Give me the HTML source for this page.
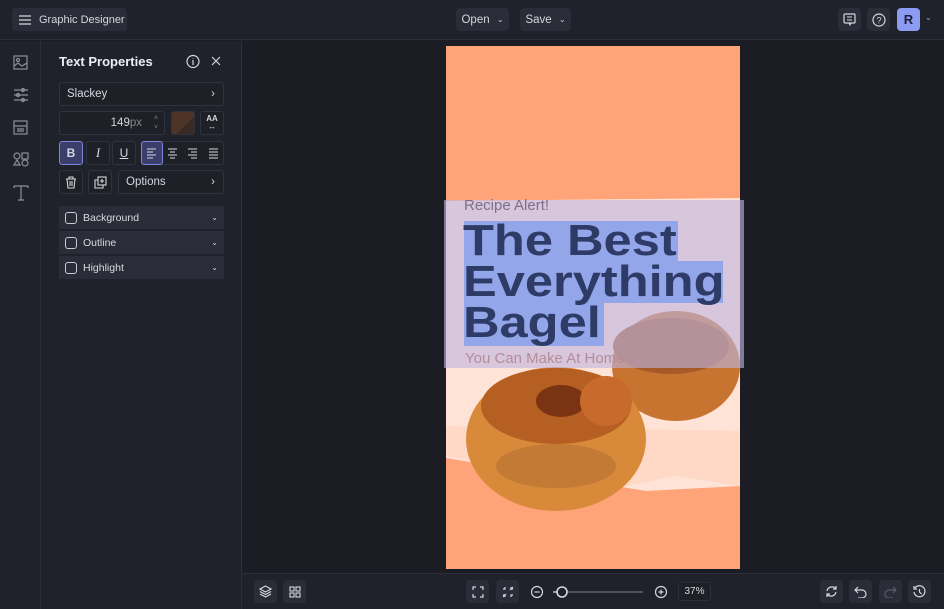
<!DOCTYPE html>
<html><head><meta charset="utf-8"><style>
*{box-sizing:border-box;margin:0;padding:0}
body{width:944px;height:609px;background:#1c1d24;font-family:"Liberation Sans",sans-serif;color:#d8dae2;position:relative;overflow:hidden;font-size:11px}
.abs{position:absolute}
.btn{position:absolute;background:#2a2c37;border-radius:4px;display:flex;align-items:center;justify-content:center;color:#d5d7df;white-space:nowrap}
.top{left:0;top:0;width:944px;height:40px;background:#20222b;border-bottom:1px solid #2c2e38}
.side{left:0;top:41px;width:41px;height:568px;background:#20222b;border-right:1px solid #2c2e38}
.panel{left:41px;top:41px;width:201px;height:568px;background:#20222b;border-right:1px solid #2c2e38}
.bot{left:242px;top:573px;width:702px;height:36px;background:#20222b;border-top:1px solid #2c2e38}
.fld{position:absolute;border:1px solid #30323d;border-radius:3px;background:#1e2028;color:#d5d7df;display:flex;align-items:center}
.acc{position:absolute;left:59px;width:165px;height:23px;background:#2a2c37;display:flex;align-items:center;font-size:10.5px}
.cb{width:12px;height:12px;border:1.3px solid #c8cad2;border-radius:3px;margin:0 6px 0 6px}
svg{display:block}
</style></head><body>
<div class="abs top"></div>
<div class="btn" style="left:12px;top:8px;width:115px;height:23px;justify-content:flex-start;padding-left:7px;font-size:11px">
<svg width="12" height="10"><path d="M0 1h12M0 5h12M0 9h12" stroke="#d5d7df" stroke-width="1.3"/></svg><span style="margin-left:8px">Graphic Designer</span></div>
<div class="btn" style="left:456px;top:8px;width:53px;height:23px;font-size:11.5px">Open&nbsp;<span style="font-size:8px;margin-left:4px">⌄</span></div>
<div class="btn" style="left:520px;top:8px;width:51px;height:23px;font-size:11.5px">Save&nbsp;<span style="font-size:8px;margin-left:4px">⌄</span></div>
<div class="btn" style="left:838px;top:8px;width:23px;height:23px"><svg width="13" height="13"><rect x="1" y="1" width="11" height="9" rx="1" fill="none" stroke="#d5d7df" stroke-width="1.2"/><path d="M4 4h5M4 7h5M6 10l1 2 1-2" stroke="#d5d7df" fill="none"/></svg></div>
<div class="btn" style="left:867px;top:8px;width:23px;height:23px"><svg width="14" height="14"><circle cx="7" cy="7" r="6" fill="none" stroke="#d5d7df" stroke-width="1.2"/><text x="7" y="10.5" font-size="9" text-anchor="middle" fill="#d5d7df" font-family="Liberation Sans">?</text></svg></div>
<div class="btn" style="left:897px;top:8px;width:23px;height:23px;background:#8c9cf2;color:#1b1e3a;font-weight:bold;font-size:13px">R</div>
<div class="abs" style="left:925px;top:13px;font-size:8px;color:#aaa">⌄</div>

<div class="abs side"></div>
<svg class="abs" style="left:13px;top:55px" width="16" height="150" fill="none" stroke="#8c8f9a" stroke-width="1.2">
<rect x="1" y="1" width="13" height="13"/><circle cx="5" cy="5" r="1.5"/><path d="M1 11l4-3 4 3 5-3"/>
<path d="M1 35h14M1 40h14M1 45h14"/><circle cx="10" cy="35" r="1.5"/><circle cx="5" cy="40" r="1.5"/><circle cx="10" cy="45" r="1.5"/>
<rect x="1" y="66" width="13" height="13"/><path d="M1 71h13M4 74h7M4 76h7"/>
<circle cx="4" cy="101" r="3"/><rect x="9" y="98" width="6" height="6"/><path d="M4 105l-3 5h6z"/><circle cx="12" cy="108" r="3"/>
<path d="M1 131h14M8 131v14M5 145h6M1 131v2M15 131v2"/>
</svg>

<div class="abs panel"></div>
<div class="abs" style="left:59px;top:54px;font-size:13px;font-weight:bold;color:#eceef3">Text Properties</div>
<svg class="abs" style="left:186px;top:54px" width="40" height="15" fill="none" stroke="#d5d7df" stroke-width="1.2"><circle cx="7" cy="7.5" r="6"/><path d="M7 6v5M7 4v.5"/><path d="M26 3l8 8M34 3l-8 8"/></svg>
<div class="fld" style="left:59px;top:82px;width:165px;height:24px;padding-left:7px;font-size:11.5px">Slackey<span style="position:absolute;right:8px">›</span></div>
<div class="fld" style="left:59px;top:111px;width:106px;height:24px;justify-content:flex-end;padding-right:22px;font-size:11.5px">149<span style="color:#888">px</span><span style="position:absolute;right:6px;font-size:7px;color:#888;line-height:9px">˄<br>˅</span></div>
<div class="abs" style="left:171px;top:111px;width:24px;height:24px;border-radius:3px;background:linear-gradient(135deg,#4d3426 60%,#3a2a24 60%);border:1px solid #30323d"></div>
<div class="fld" style="left:200px;top:111px;width:24px;height:24px;justify-content:center;font-size:8px;font-weight:bold;line-height:8px;text-align:center">AA<br>↔</div>
<div class="fld" style="left:59px;top:141px;width:24px;height:24px;justify-content:center;background:#3b3d6a;border-color:#7d85d8;font-weight:bold;font-size:12px">B</div>
<div class="fld" style="left:86px;top:141px;width:24px;height:24px;justify-content:center;font-style:italic;font-family:'Liberation Serif';font-size:13px">I</div>
<div class="fld" style="left:112px;top:141px;width:24px;height:24px;justify-content:center;text-decoration:underline;font-size:12px">U</div>
<div class="fld" style="left:141px;top:141px;width:83px;height:24px"></div>
<div class="abs" style="left:141px;top:141px;width:22px;height:24px;background:#3b3d6a;border:1px solid #7d85d8;border-radius:3px"></div>
<svg class="abs" style="left:146px;top:147px" width="75" height="12" stroke="#d5d7df" stroke-width="1.1"><path d="M1 2h9M1 5h6M1 8h9M1 11h6"/><path d="M22 2h9M24 5h5M22 8h9M24 11h5"/><path d="M42 2h9M45 5h6M42 8h9M45 11h6"/><path d="M63 2h9M63 5h9M63 8h9M63 11h9"/></svg>
<div class="fld" style="left:59px;top:170px;width:24px;height:24px;justify-content:center"><svg width="12" height="13" fill="none" stroke="#d5d7df" stroke-width="1.1"><path d="M1 3h10M4 3V1h4v2M2 3l1 9h6l1-9M5 5v5M7 5v5"/></svg></div>
<div class="fld" style="left:88px;top:170px;width:24px;height:24px;justify-content:center"><svg width="13" height="13" fill="none" stroke="#d5d7df" stroke-width="1.1"><rect x="4" y="1" width="8" height="8"/><path d="M4 4H1v8h8V9M8 3v4M6 5h4"/></svg></div>
<div class="fld" style="left:118px;top:170px;width:106px;height:24px;padding-left:7px;font-size:11.5px">Options<span style="position:absolute;right:8px">›</span></div>
<div class="acc" style="top:206px"><div class="cb"></div>Background<span style="position:absolute;right:6px;font-size:8px">⌄</span></div>
<div class="acc" style="top:231px"><div class="cb"></div>Outline<span style="position:absolute;right:6px;font-size:8px">⌄</span></div>
<div class="acc" style="top:256px"><div class="cb"></div>Highlight<span style="position:absolute;right:6px;font-size:8px">⌄</span></div>

<!-- canvas -->
<svg class="abs" style="left:446px;top:46px" width="294" height="523">
<rect width="294" height="523" fill="#ffa478"/>
<path d="M0 155 L294 152 L294 440 L200 445 L0 412 Z" fill="#ffe3d6"/>
<path d="M0 380 L294 385 L294 440 L230 430 L180 440 L0 410Z" fill="#ffd8c6"/>
<ellipse cx="230" cy="320" rx="64" ry="55" fill="#c6742f"/>
<ellipse cx="225" cy="300" rx="58" ry="28" fill="#a65a28"/>
<ellipse cx="110" cy="393" rx="90" ry="72" fill="#d88a3a"/>
<ellipse cx="110" cy="360" rx="75" ry="38" fill="#b55f22"/>
<ellipse cx="115" cy="355" rx="25" ry="16" fill="#7a3414"/>
<ellipse cx="160" cy="355" rx="26" ry="25" fill="#c86a2c"/>
<ellipse cx="110" cy="420" rx="60" ry="22" fill="#c27a35"/>
</svg>
<div class="abs" style="left:444px;top:200px;width:300px;height:168px;background:rgba(190,180,225,0.62)"></div>
<div class="abs" style="left:464px;top:221px;width:214px;height:40px;background:#93a6ea"></div>
<div class="abs" style="left:464px;top:261px;width:259px;height:42px;background:#93a6ea"></div>
<div class="abs" style="left:464px;top:303px;width:140px;height:43px;background:#93a6ea"></div>
<div class="abs" style="left:464px;top:197px;font-size:15px;color:#7e6f8a">Recipe Alert!</div>
<div class="abs" style="left:463px;top:220px;font-size:44px;font-weight:bold;color:#2e3b66;line-height:41px;font-family:'Liberation Sans',sans-serif;transform:scaleX(1.15);transform-origin:left;white-space:nowrap">The Best<br>Everything<br>Bagel</div>
<div class="abs" style="left:465px;top:350px;font-size:15px;color:#b58c9a">You Can Make At Home</div>

<div class="abs bot"></div>
<div class="btn" style="left:254px;top:580px;width:23px;height:23px"><svg width="13" height="13" fill="none" stroke="#d5d7df" stroke-width="1.1"><path d="M6.5 1L12 4 6.5 7 1 4z M1 6.5l5.5 3 5.5-3M1 9l5.5 3 5.5-3"/></svg></div>
<div class="btn" style="left:283px;top:580px;width:23px;height:23px"><svg width="12" height="12" fill="none" stroke="#d5d7df" stroke-width="1.1"><rect x="1" y="1" width="4" height="4"/><rect x="7" y="1" width="4" height="4"/><rect x="1" y="7" width="4" height="4"/><rect x="7" y="7" width="4" height="4"/></svg></div>
<div class="btn" style="left:466px;top:580px;width:23px;height:23px"><svg width="12" height="12" fill="none" stroke="#d5d7df" stroke-width="1.2"><path d="M1 4V1h3M8 1h3v3M11 8v3H8M4 11H1V8"/></svg></div>
<div class="btn" style="left:496px;top:580px;width:23px;height:23px"><svg width="12" height="12" fill="none" stroke="#d5d7df" stroke-width="1.2"><path d="M1 3h2V1M9 1v2h2M11 9H9v2M3 11V9H1M8 4l3-3M4 8l-3 3"/></svg></div>
<svg class="abs" style="left:530px;top:584px" width="140" height="16" fill="none" stroke="#d5d7df" stroke-width="1.2"><circle cx="7" cy="8" r="5.5"/><path d="M4.5 8h5"/><path d="M23 8h90" stroke="#6b6e7a"/><circle cx="32" cy="8" r="5" fill="#20222b" stroke-width="1.6"/><path d="M23 8h4"/><circle cx="131" cy="8" r="5.5"/><path d="M128.5 8h5M131 5.5v5"/></svg>
<div class="fld" style="left:678px;top:582px;width:33px;height:19px;justify-content:center;font-size:10px;border-color:#2c2e38">37%</div>
<div class="btn" style="left:820px;top:580px;width:23px;height:23px"><svg width="13" height="13" fill="none" stroke="#d5d7df" stroke-width="1.2"><path d="M2 6a5 5 0 0 1 9-2M11 1v3H8M11 7a5 5 0 0 1-9 2M2 12V9h3"/></svg></div>
<div class="btn" style="left:849px;top:580px;width:23px;height:23px"><svg width="13" height="12" fill="none" stroke="#d5d7df" stroke-width="1.2"><path d="M4 1L1 4l3 3M1 4h7a4 4 0 0 1 0 8H4"/></svg></div>
<div class="btn" style="left:879px;top:580px;width:23px;height:23px"><svg width="13" height="12" fill="none" stroke="#5a5c66" stroke-width="1.2"><path d="M9 1l3 3-3 3M12 4H5a4 4 0 0 0 0 8h4"/></svg></div>
<div class="btn" style="left:908px;top:580px;width:23px;height:23px"><svg width="13" height="13" fill="none" stroke="#d5d7df" stroke-width="1.2"><path d="M2 3a5.5 5.5 0 1 1-1 4M1 1v3h3M6.5 4v3l2 2"/></svg></div>
</body></html>
